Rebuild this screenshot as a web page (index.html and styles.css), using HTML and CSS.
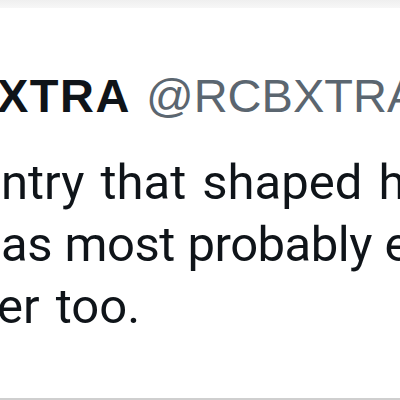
FILE: index.html
```html
<!DOCTYPE html>
<html>
<head>
<meta charset="utf-8">
<link rel="stylesheet" href="styles.css">
</head>
<body>
<div class="page">
  <div class="topband"></div>
  <article class="tweet">
    <div class="head"><span class="name">XTRA</span><span class="handle">@RCBXTRA</span></div>
    <div class="body">
      <div class="line">ntry that shaped h</div>
      <div class="line line-2">as most probably e</div>
      <div class="line line-last">er too.</div>
    </div>
  </article>
</div>
</body>
</html>
```
FILE: styles.css
```css
html, body {
  margin: 0;
  padding: 0;
  background: #ffffff;
}
.page {
  width: 400px;
  height: 400px;
  overflow: hidden;
  background: #ffffff;
}
.topband {
  height: 8px;
  background: linear-gradient(#efefef, #f7f7f7);
}
.tweet {
  height: 392px;
  box-sizing: border-box;
  border-bottom: 2px solid #cfcfcf;
  overflow: hidden;
  padding-top: 64px;
}
.head {
  display: flex;
  gap: 15px;
  font-family: "Liberation Sans", Arial, sans-serif;
  font-size: 47px;
  line-height: 48px;
  white-space: nowrap;
  margin-left: -3px;
}
.name {
  font-weight: 700;
  color: #0f1419;
  letter-spacing: 1.5px;
}
.handle {
  color: #5b6670;
}
.body {
  margin-top: 32px;
  font-family: "Roboto", sans-serif;
  font-size: 49px;
  line-height: 62px;
  word-spacing: 4px;
  color: #0f1419;
}
.line {
  white-space: nowrap;
  margin-left: 1px;
}
.line-2 {
  letter-spacing: -0.5px;
  word-spacing: 1px;
}
.line-last {
  margin-left: -3px;
}
```
